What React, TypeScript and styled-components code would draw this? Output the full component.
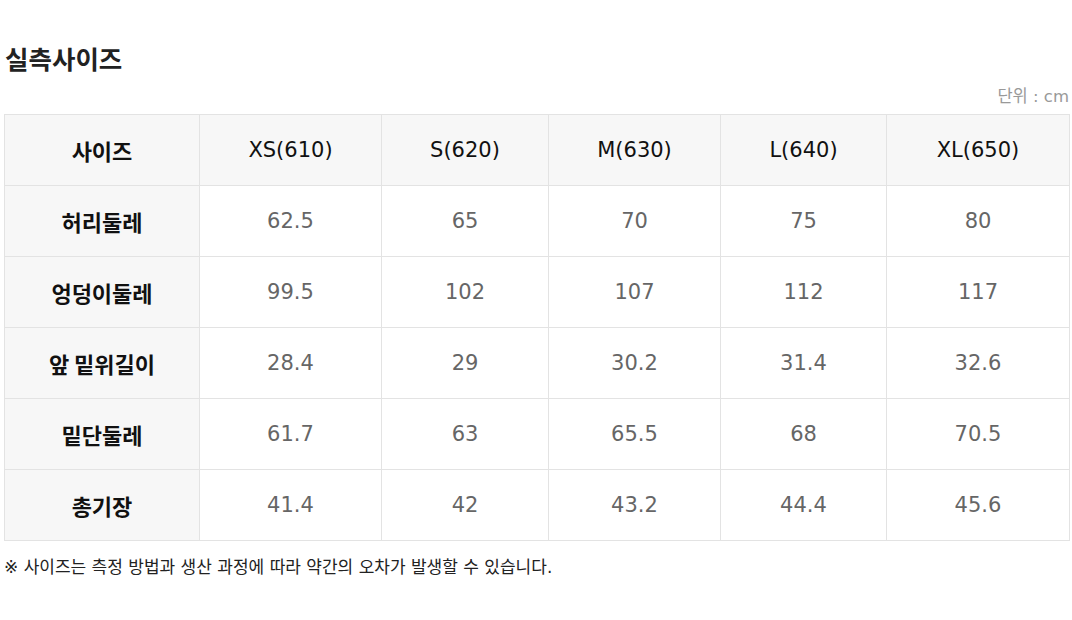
import React from "react";
import styled, { createGlobalStyle } from "styled-components";

const GlobalStyle = createGlobalStyle`
  html, body {
    margin: 0;
    padding: 0;
    background: #fff;
  }
  body {
    font-family: "DejaVu Sans", "Noto Sans CJK KR", sans-serif;
    color: #222;
  }
`;

const Page = styled.div`
  width: 1072px;
  box-sizing: border-box;
  padding: 40px 3px 0 4px;
`;

const Title = styled.h2`
  margin: 0 0 0 1px;
  font-family: "Noto Sans CJK KR", sans-serif;
  font-size: 25.5px;
  font-weight: 700;
  line-height: 36px;
  color: #222;
`;

const Unit = styled.div`
  margin-top: 10px;
  text-align: right;
  font-size: 16.5px;
  line-height: 22px;
  color: #999;
`;

const Table = styled.table`
  margin-top: 6px;
  width: 1065px;
  border-collapse: collapse;
  table-layout: fixed;
`;

const Cell = styled.td<{ $head?: boolean; $label?: boolean }>`
  height: 71px;
  padding: 0;
  box-sizing: border-box;
  border: 1px solid #e3e3e3;
  text-align: center;
  vertical-align: middle;
  font-size: ${(p) => (p.$label ? "22px" : "21px")};
  background: ${(p) => (p.$head || p.$label ? "#f7f7f7" : "#fff")};
  color: ${(p) => (p.$head || p.$label ? "#111" : "#666")};
  font-weight: ${(p) => (p.$label ? 700 : 400)};
  font-family: ${(p) =>
    p.$label ? `"Noto Sans CJK KR", sans-serif` : `"DejaVu Sans", "Noto Sans CJK KR", sans-serif`};
`;

const Note = styled.p`
  margin: 15px 0 0;
  font-size: 17px;
  line-height: 22px;
  color: #222;
`;

const widths = [195, 182, 167, 172, 166, 183];
const sizes = ["XS(610)", "S(620)", "M(630)", "L(640)", "XL(650)"];
const rows: [string, string[]][] = [
  ["허리둘레", ["62.5", "65", "70", "75", "80"]],
  ["엉덩이둘레", ["99.5", "102", "107", "112", "117"]],
  ["앞 밑위길이", ["28.4", "29", "30.2", "31.4", "32.6"]],
  ["밑단둘레", ["61.7", "63", "65.5", "68", "70.5"]],
  ["총기장", ["41.4", "42", "43.2", "44.4", "45.6"]],
];

export default function App() {
  return (
    <Page>
      <GlobalStyle />
      <Title>실측사이즈</Title>
      <Unit>단위 : cm</Unit>
      <Table>
        <colgroup>
          {widths.map((w, i) => (
            <col key={i} style={{ width: w }} />
          ))}
        </colgroup>
        <thead>
          <tr>
            <Cell as="th" $head $label>
              사이즈
            </Cell>
            {sizes.map((s) => (
              <Cell as="th" $head key={s}>
                {s}
              </Cell>
            ))}
          </tr>
        </thead>
        <tbody>
          {rows.map(([label, vals]) => (
            <tr key={label}>
              <Cell $label>{label}</Cell>
              {vals.map((v, i) => (
                <Cell key={i}>{v}</Cell>
              ))}
            </tr>
          ))}
        </tbody>
      </Table>
      <Note>※ 사이즈는 측정 방법과 생산 과정에 따라 약간의 오차가 발생할 수 있습니다.</Note>
    </Page>
  );
}
